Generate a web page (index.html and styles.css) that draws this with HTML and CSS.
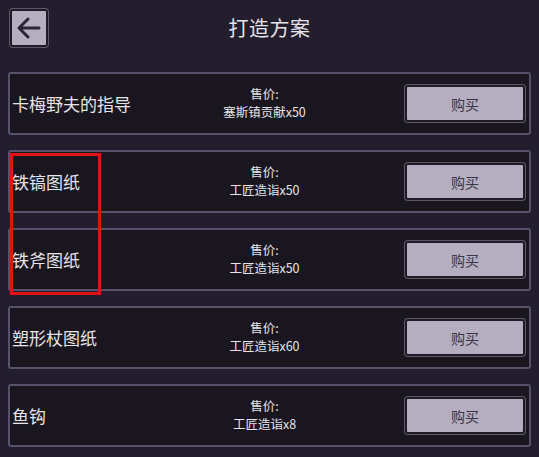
FILE: index.html
```html
<!DOCTYPE html>
<html lang="zh">
<head>
<meta charset="utf-8">
<link rel="stylesheet" href="styles.css">
</head>
<body>
<div class="page">
  <header class="header">
    <button class="back" aria-label="返回">
      <svg width="26" height="24" viewBox="0 0 26 24"><path d="M23 12H3M12 3L3 12L12 21" fill="none" stroke="#2a2535" stroke-width="3" stroke-linecap="round" stroke-linejoin="round"/></svg>
    </button>
    <h1 class="title">打造方案</h1>
  </header>
  <main class="list">
    <div class="card">
      <div class="name">卡梅野夫的指导</div>
      <div class="price"><span>售价:</span><span>塞斯镇贡献x50</span></div>
      <button class="buy">购买</button>
    </div>
    <div class="card">
      <div class="name">铁镐图纸</div>
      <div class="price"><span>售价:</span><span>工匠造诣x50</span></div>
      <button class="buy">购买</button>
    </div>
    <div class="card">
      <div class="name">铁斧图纸</div>
      <div class="price"><span>售价:</span><span>工匠造诣x50</span></div>
      <button class="buy">购买</button>
    </div>
    <div class="card">
      <div class="name">塑形杖图纸</div>
      <div class="price"><span>售价:</span><span>工匠造诣x60</span></div>
      <button class="buy">购买</button>
    </div>
    <div class="card">
      <div class="name">鱼钩</div>
      <div class="price"><span>售价:</span><span>工匠造诣x8</span></div>
      <button class="buy">购买</button>
    </div>
    <div class="highlight"></div>
  </main>
</div>
</body>
</html>
```
FILE: styles.css
```css
html, body {
  margin: 0;
  padding: 0;
  background: #221e2d;
}
body {
  font-family: "Noto Sans CJK SC", "Noto Sans", sans-serif;
  color: #e6e4ea;
  width: 539px;
  height: 457px;
  overflow: hidden;
}
.page {
  position: relative;
}
.header {
  position: relative;
  height: 72px;
  display: flex;
  align-items: flex-start;
  justify-content: center;
}
.back {
  position: absolute;
  left: 10px;
  top: 9px;
  width: 38px;
  height: 38px;
  padding: 0;
  background: #b4aec0;
  border: 2px solid #1e1a26;
  border-radius: 3px;
  box-shadow: 0 0 0 1px #5c5868;
  display: flex;
  align-items: center;
  justify-content: center;
}
.title {
  margin: 13px 0 0;
  font-size: 20px;
  font-weight: normal;
  line-height: 30px;
  letter-spacing: 0.5px;
}
.list {
  position: relative;
  display: flex;
  flex-direction: column;
  gap: 15px;
  padding: 0 8px;
}
.card {
  height: 59px;
  background: #19161f;
  border: 2px solid #57526a;
  border-radius: 3px;
  display: grid;
  grid-template-columns: 1fr auto 1fr;
  align-items: center;
  padding: 0 4px 0 2px;
}
.name {
  font-size: 17px;
  line-height: 20px;
  white-space: nowrap;
}
.price {
  display: flex;
  flex-direction: column;
  align-items: center;
  font-size: 12.5px;
  line-height: 18px;
  margin-left: -8px;
  margin-top: -1px;
}
.buy {
  justify-self: end;
  width: 120px;
  height: 37px;
  margin-top: 0px;
  background: #b4aec0;
  border: 2px solid #1e1a26;
  border-radius: 3px;
  box-shadow: 0 0 0 1px #5c5868;
  font-family: "Noto Sans CJK SC", sans-serif;
  font-size: 14px;
  color: #3a3545;
  padding: 0;
}
.highlight {
  position: absolute;
  left: 10px;
  top: 81px;
  width: 85px;
  height: 136px;
  border: 3px solid #e01414;
  pointer-events: none;
}
```
